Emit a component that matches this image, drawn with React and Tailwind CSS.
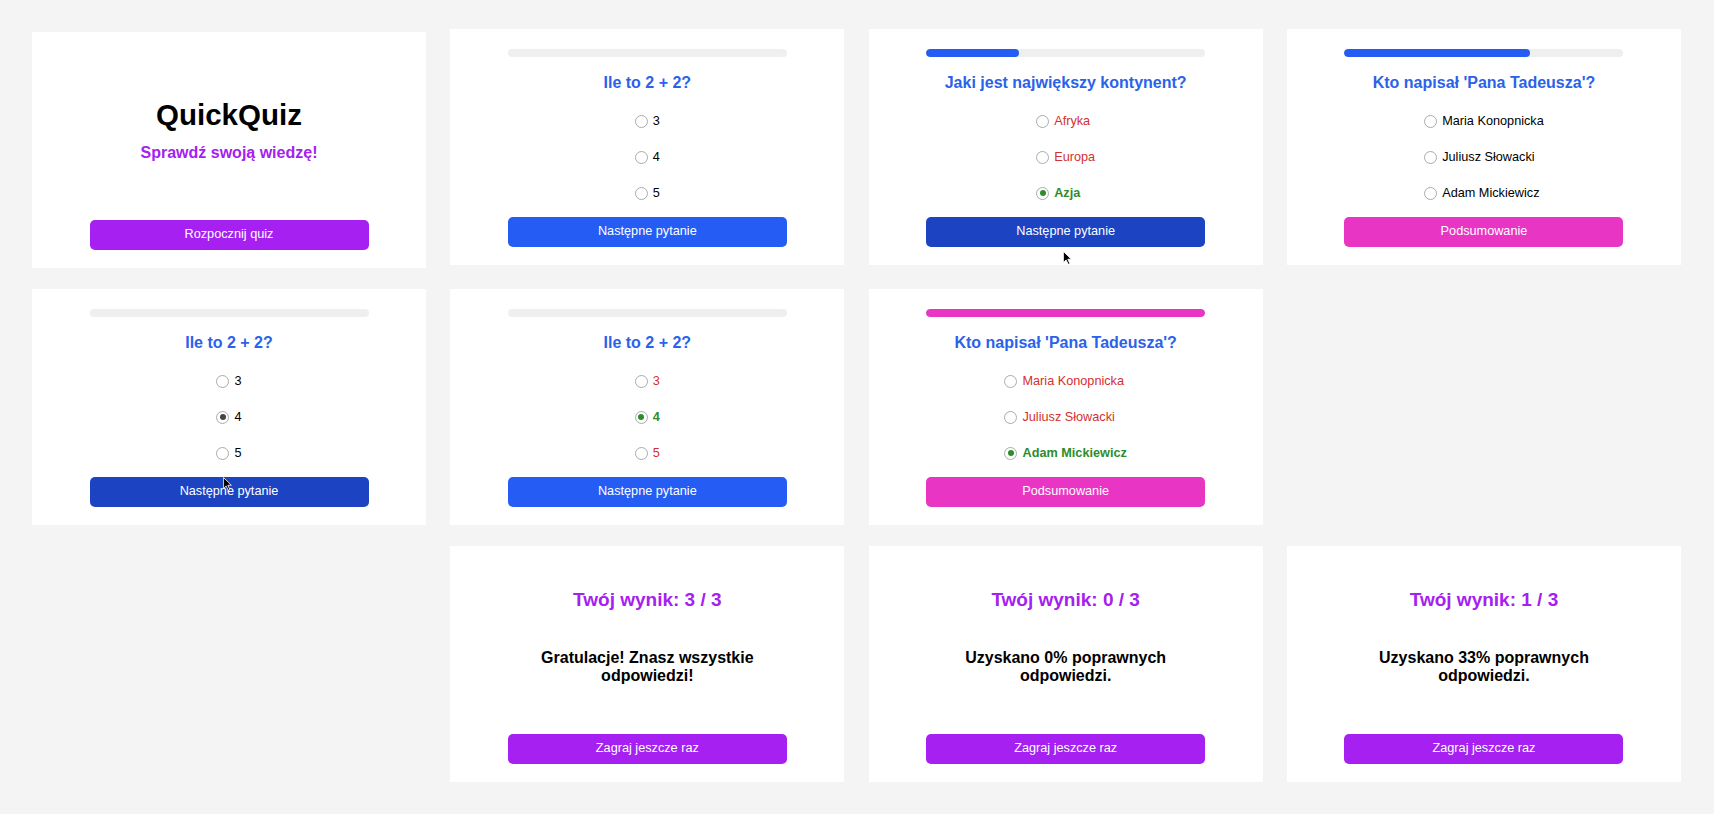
import React from 'react'

const BLUE = 'bg-[#255cf4]'
const BLUE_HOVER = 'bg-[#1b43c2]'
const PINK = 'bg-[#e835c3]'
const PURPLE = 'bg-[#a520f1]'

function Cursor({ className }) {
    // kursor myszy widoczny na zrzucie
    return (
        <svg className={`absolute w-[9px] h-[14px] ${className}`} viewBox="0 0 11 17">
            <path d="M0.5 0.5 L0.5 14 L3.8 10.8 L6.4 16.2 L8.4 15.3 L5.9 10 L10.2 10 Z" fill="#000" stroke="#fff" strokeWidth="1" strokeLinejoin="round" />
        </svg>
    )
}

function Card({ children, className = '' }) {
    return (
        <div className={`relative bg-white h-[236px] flex flex-col items-center pt-[20px] pb-[18px] ${className}`}>
            {children}
        </div>
    )
}

function Button({ label, color }) {
    return (
        <button className={`w-[279px] h-[30px] rounded-[5px] text-white text-[12.7px] ${color}`}>
            {label}
        </button>
    )
}

function Radio({ checked, dot }) {
    return (
        <span className="w-[13px] h-[13px] rounded-full border border-[#ababab] bg-white flex items-center justify-center shrink-0">
            {checked && <span className={`w-[6px] h-[6px] rounded-full ${dot}`} />}
        </span>
    )
}

function Option({ label, state }) {
    let text = 'text-black'
    let dot = 'bg-[#444]'
    if (state === 'wrong') text = 'text-[#d3302f]'
    if (state === 'correct') {
        text = 'text-[#2f8c2b] font-bold'
        dot = 'bg-[#2f8c2b]'
    }
    const checked = state === 'correct' || state === 'selected'
    return (
        <label className="h-[36px] flex items-center gap-[5px]">
            <Radio checked={checked} dot={dot} />
            <span className={`text-[12.7px] leading-[16px] ${text}`}>{label}</span>
        </label>
    )
}

function QuestionCard({ progress, barColor = BLUE, question, options, button, buttonColor, cursor }) {
    return (
        <Card>
            <div className="w-[279px] h-[8px] rounded-full bg-[#efefef] overflow-hidden">
                <div className={`h-full rounded-full ${barColor}`} style={{ width: `${progress}%` }} />
            </div>
            <h2 className="mt-[16px] text-[16px] leading-[20px] font-bold text-[#2a62ea]">{question}</h2>
            <div className="mt-[10px] flex flex-col items-start">
                {options.map((o) => (
                    <Option key={o.label} label={o.label} state={o.state} />
                ))}
            </div>
            <div className="mt-[6px]">
                <Button label={button} color={buttonColor} />
            </div>
            {cursor}
        </Card>
    )
}

function StartCard() {
    return (
        <Card className="mt-[3px]">
            <h1 className="mt-[45px] text-[29.5px] leading-[36px] font-bold text-black">QuickQuiz</h1>
            <p className="mt-[10px] text-[16px] leading-[20px] font-bold text-[#a520f1]">Sprawdź swoją wiedzę!</p>
            <div className="mt-auto">
                <Button label="Rozpocznij quiz" color={PURPLE} />
            </div>
        </Card>
    )
}

function ResultCard({ score, message }) {
    return (
        <Card>
            <h2 className="mt-[22px] text-[19px] leading-[24px] font-bold text-[#a520f1]">Twój wynik: {score} / 3</h2>
            <p className="mt-[37px] w-[279px] text-center text-[16px] leading-[18.4px] font-bold text-black">{message}</p>
            <div className="mt-auto">
                <Button label="Zagraj jeszcze raz" color={PURPLE} />
            </div>
        </Card>
    )
}

const opts = (labels, states = []) => labels.map((label, i) => ({ label, state: states[i] || 'idle' }))

const MATH = ['3', '4', '5']
const GEO = ['Afryka', 'Europa', 'Azja']
const LIT = ['Maria Konopnicka', 'Juliusz Słowacki', 'Adam Mickiewicz']

export default function App() {
    return (
        <div className="min-h-screen bg-[#f4f4f4] pt-[29px] px-[32px] font-['Liberation_Sans',Arial,sans-serif]">
            <div className="grid grid-cols-[repeat(4,394px)] gap-x-[24.33px] gap-y-[21px] items-start">
                <StartCard />
                <QuestionCard progress={0} question="Ile to 2 + 2?" options={opts(MATH)} button="Następne pytanie" buttonColor={BLUE} />
                <QuestionCard
                    progress={33.33}
                    question="Jaki jest największy kontynent?"
                    options={opts(GEO, ['wrong', 'wrong', 'correct'])}
                    button="Następne pytanie"
                    buttonColor={BLUE_HOVER}
                    cursor={<Cursor className="left-[194px] top-[222px]" />}
                />
                <QuestionCard progress={66.67} question="Kto napisał 'Pana Tadeusza'?" options={opts(LIT)} button="Podsumowanie" buttonColor={PINK} />

                <QuestionCard
                    progress={0}
                    question="Ile to 2 + 2?"
                    options={opts(MATH, ['idle', 'selected', 'idle'])}
                    button="Następne pytanie"
                    buttonColor={BLUE_HOVER}
                    cursor={<Cursor className="left-[191px] top-[188px]" />}
                />
                <QuestionCard progress={0} question="Ile to 2 + 2?" options={opts(MATH, ['wrong', 'correct', 'wrong'])} button="Następne pytanie" buttonColor={BLUE} />
                <QuestionCard progress={100} barColor={PINK} question="Kto napisał 'Pana Tadeusza'?" options={opts(LIT, ['wrong', 'wrong', 'correct'])} button="Podsumowanie" buttonColor={PINK} />
                <div />

                <div className="col-start-2">
                    <ResultCard score={3} message="Gratulacje! Znasz wszystkie odpowiedzi!" />
                </div>
                <ResultCard score={0} message="Uzyskano 0% poprawnych odpowiedzi." />
                <ResultCard score={1} message="Uzyskano 33% poprawnych odpowiedzi." />
            </div>
        </div>
    )
}
